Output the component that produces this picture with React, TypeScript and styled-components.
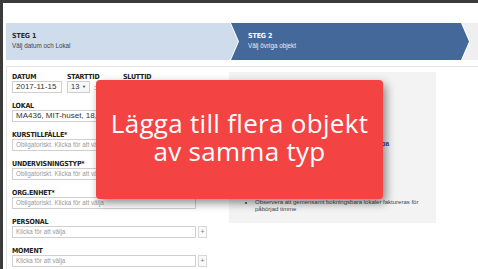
import React from "react";
import styled, { createGlobalStyle } from "styled-components";

const GlobalStyle = createGlobalStyle`
  html, body { margin: 0; padding: 0; }
  body {
    background: #3b3b3b;
    width: 478px;
    height: 269px;
    overflow: hidden;
    font-family: "Liberation Sans", Arial, sans-serif;
  }
`;

const Page = styled.div`
  position: relative;
  margin: 3px 0 0 3px;
  width: 475px;
  height: 266px;
  background: #ffffff;
  overflow: hidden;
  padding: 20px 0 0 3px;
  box-sizing: border-box;
`;

const Steps = styled.div`
  display: flex;
  height: 37px;
`;

const Step = styled.div<{ $variant: "done" | "active" | "next"; $first?: boolean; $w: number }>`
  flex: 0 0 ${(p) => p.$w}px;
  margin-left: ${(p) => (p.$first ? 0 : -7)}px;
  background: ${(p) =>
    p.$variant === "done" ? "#cfdcec" : p.$variant === "active" ? "#45689a" : "#efefef"};
  color: ${(p) => (p.$variant === "active" ? "#ffffff" : "#2a2a2a")};
  clip-path: ${(p) =>
    p.$first
      ? "polygon(0 0, calc(100% - 8px) 0, 100% 50%, calc(100% - 8px) 100%, 0 100%)"
      : "polygon(0 0, calc(100% - 8px) 0, 100% 50%, calc(100% - 8px) 100%, 0 100%, 8px 50%)"};
  padding: 9px 0 0 ${(p) => (p.$first ? 6 : 17)}px;
  box-sizing: border-box;
`;

const StepTitle = styled.div`
  font-family: "Liberation Sans Narrow", "DejaVu Sans Condensed", "Roboto Condensed", "Liberation Sans", sans-serif;
  font-weight: 700;
  font-size: 7px;
  line-height: 9px;
  letter-spacing: -0.1px;
`;

const StepSub = styled.div<{ $light?: boolean }>`
  font-size: 6.3px;
  line-height: 9px;
  color: ${(p) => (p.$light ? "#e8eef7" : "#444")};
`;

const Panel = styled.div`
  margin: 6px 0 0 0;
  border: 1px solid #e4e4e4;
  border-right: none;
  border-bottom: none;
  padding: 6px 0 0 5px;
  display: flex;
  gap: 21px;
  align-items: flex-start;
  height: 220px;
  box-sizing: border-box;
`;

const FormCol = styled.div`
  width: 196px;
  display: flex;
  flex-direction: column;
  gap: 9px;
`;

const Row = styled.div`
  display: flex;
  align-items: flex-end;
`;

const Field = styled.div<{ $w?: number }>`
  display: flex;
  flex-direction: column;
  width: ${(p) => (p.$w ? `${p.$w}px` : "auto")};
`;

const Label = styled.div`
  font-family: "Liberation Sans Narrow", "DejaVu Sans Condensed", "Roboto Condensed", "Liberation Sans", sans-serif;
  font-weight: 700;
  font-size: 7px;
  line-height: 8px;
  letter-spacing: -0.2px;
  color: #222;
  text-transform: uppercase;
  white-space: nowrap;
`;

const Controls = styled.div`
  display: flex;
  align-items: center;
  gap: 2px;
`;

const Input = styled.div<{ $w: number; $placeholder?: boolean }>`
  width: ${(p) => p.$w}px;
  height: 12px;
  border: 1px solid #cfcfcf;
  box-sizing: border-box;
  background: #fff;
  font-size: ${(p) => (p.$placeholder ? 6.3 : 8)}px;
  line-height: 10px;
  padding: 0 3px;
  color: ${(p) => (p.$placeholder ? "#9a9a9a" : "#333")};
  white-space: nowrap;
  overflow: hidden;
`;

const Select = styled.div`
  width: 24px;
  height: 12px;
  border: 1px solid #cfcfcf;
  box-sizing: border-box;
  background: #f7f7f7;
  font-size: 7.5px;
  line-height: 10px;
  padding: 0 3px;
  color: #333;
  display: flex;
  justify-content: space-between;
`;

const Caret = styled.span`
  font-size: 4px;
`;

const Colon = styled.span`
  font-size: 7px;
  color: #333;
  margin: 0 2px;
`;

const PlusBtn = styled.div`
  width: 9px;
  height: 12px;
  border: 1px solid #d6d6d6;
  box-sizing: border-box;
  background: #fafafa;
  color: #777;
  font-size: 7px;
  line-height: 10px;
  text-align: center;
`;

const InfoBox = styled.div`
  margin-top: -1px;
  width: 207px;
  height: 151px;
  background: #f3f3f3;
  padding: 0 0 0 20px;
  box-sizing: border-box;
  display: flex;
  flex-direction: column;
`;

const InfoLink = styled.div`
  margin-top: 68px;
  padding-left: 9px;
  font-size: 6.5px;
  font-weight: 700;
  color: #1f3fa8;
  line-height: 8px;
  white-space: nowrap;
`;

const InfoList = styled.ul`
  margin: 51px 0 0 0;
  padding: 0 0 0 6px;
  font-size: 6px;
  line-height: 7px;
  color: #444;
  width: 170px;
`;

const Overlay = styled.div`
  position: absolute;
  left: 93px;
  top: 77px;
  width: 287px;
  height: 119px;
  background: #f44343;
  border-radius: 4px;
  box-shadow: 3px 4px 10px rgba(0, 0, 0, 0.45);
  display: flex;
  align-items: center;
  justify-content: center;
  text-align: center;
  color: #ffffff;
  font-family: "Open Sans", "Noto Sans", sans-serif;
  font-size: 26px;
  letter-spacing: 0.3px;
  line-height: 28px;
  padding-bottom: 5px;
  box-sizing: border-box;
`;

export default function App() {
  return (
    <>
      <GlobalStyle />
      <Page>
        <Steps>
          <Step $variant="done" $first $w={232}>
            <StepTitle>STEG 1</StepTitle>
            <StepSub>Välj datum och Lokal</StepSub>
          </Step>
          <Step $variant="active" $w={238}>
            <StepTitle>STEG 2</StepTitle>
            <StepSub $light>Välj övriga objekt</StepSub>
          </Step>
          <Step $variant="next" $w={40} />
        </Steps>
        <Panel>
          <FormCol>
            <Row>
              <Field $w={55}>
                <Label>Datum</Label>
                <Input $w={50}>2017-11-15</Input>
              </Field>
              <Field $w={56}>
                <Label>Starttid</Label>
                <Controls>
                  <Select>
                    13 <Caret>▼</Caret>
                  </Select>
                  <Colon>:</Colon>
                  <Select>
                    00 <Caret>▼</Caret>
                  </Select>
                </Controls>
              </Field>
              <Field>
                <Label>Sluttid</Label>
                <Controls>
                  <Select>
                    15 <Caret>▼</Caret>
                  </Select>
                </Controls>
              </Field>
            </Row>
            <Field>
              <Label>Lokal</Label>
              <Input $w={184}>MA436, MIT-huset, 18, Lärosal</Input>
            </Field>
            <Field>
              <Label>Kurstillfälle*</Label>
              <Input $w={184} $placeholder>Obligatoriskt. Klicka för att välja</Input>
            </Field>
            <Field>
              <Label>Undervisningstyp*</Label>
              <Input $w={184} $placeholder>Obligatoriskt. Klicka för att välja</Input>
            </Field>
            <Field>
              <Label>Org.enhet*</Label>
              <Input $w={184} $placeholder>Obligatoriskt. Klicka för att välja</Input>
            </Field>
            <Field>
              <Label>Personal</Label>
              <Controls>
                <Input $w={184} $placeholder>Klicka för att välja</Input>
                <PlusBtn>+</PlusBtn>
              </Controls>
            </Field>
            <Field>
              <Label>Moment</Label>
              <Controls>
                <Input $w={184} $placeholder>Klicka för att välja</Input>
                <PlusBtn>+</PlusBtn>
              </Controls>
            </Field>
          </FormCol>
          <InfoBox>
            <InfoLink>Visa tillgänglighet för lokaler i lokalgruppa</InfoLink>
            <InfoList>
              <li>Observera att gemensamt bokningsbara lokaler faktureras för påbörjad timme</li>
            </InfoList>
          </InfoBox>
        </Panel>
        <Overlay>
          Lägga till flera objekt
          <br />
          av samma typ
        </Overlay>
      </Page>
    </>
  );
}
